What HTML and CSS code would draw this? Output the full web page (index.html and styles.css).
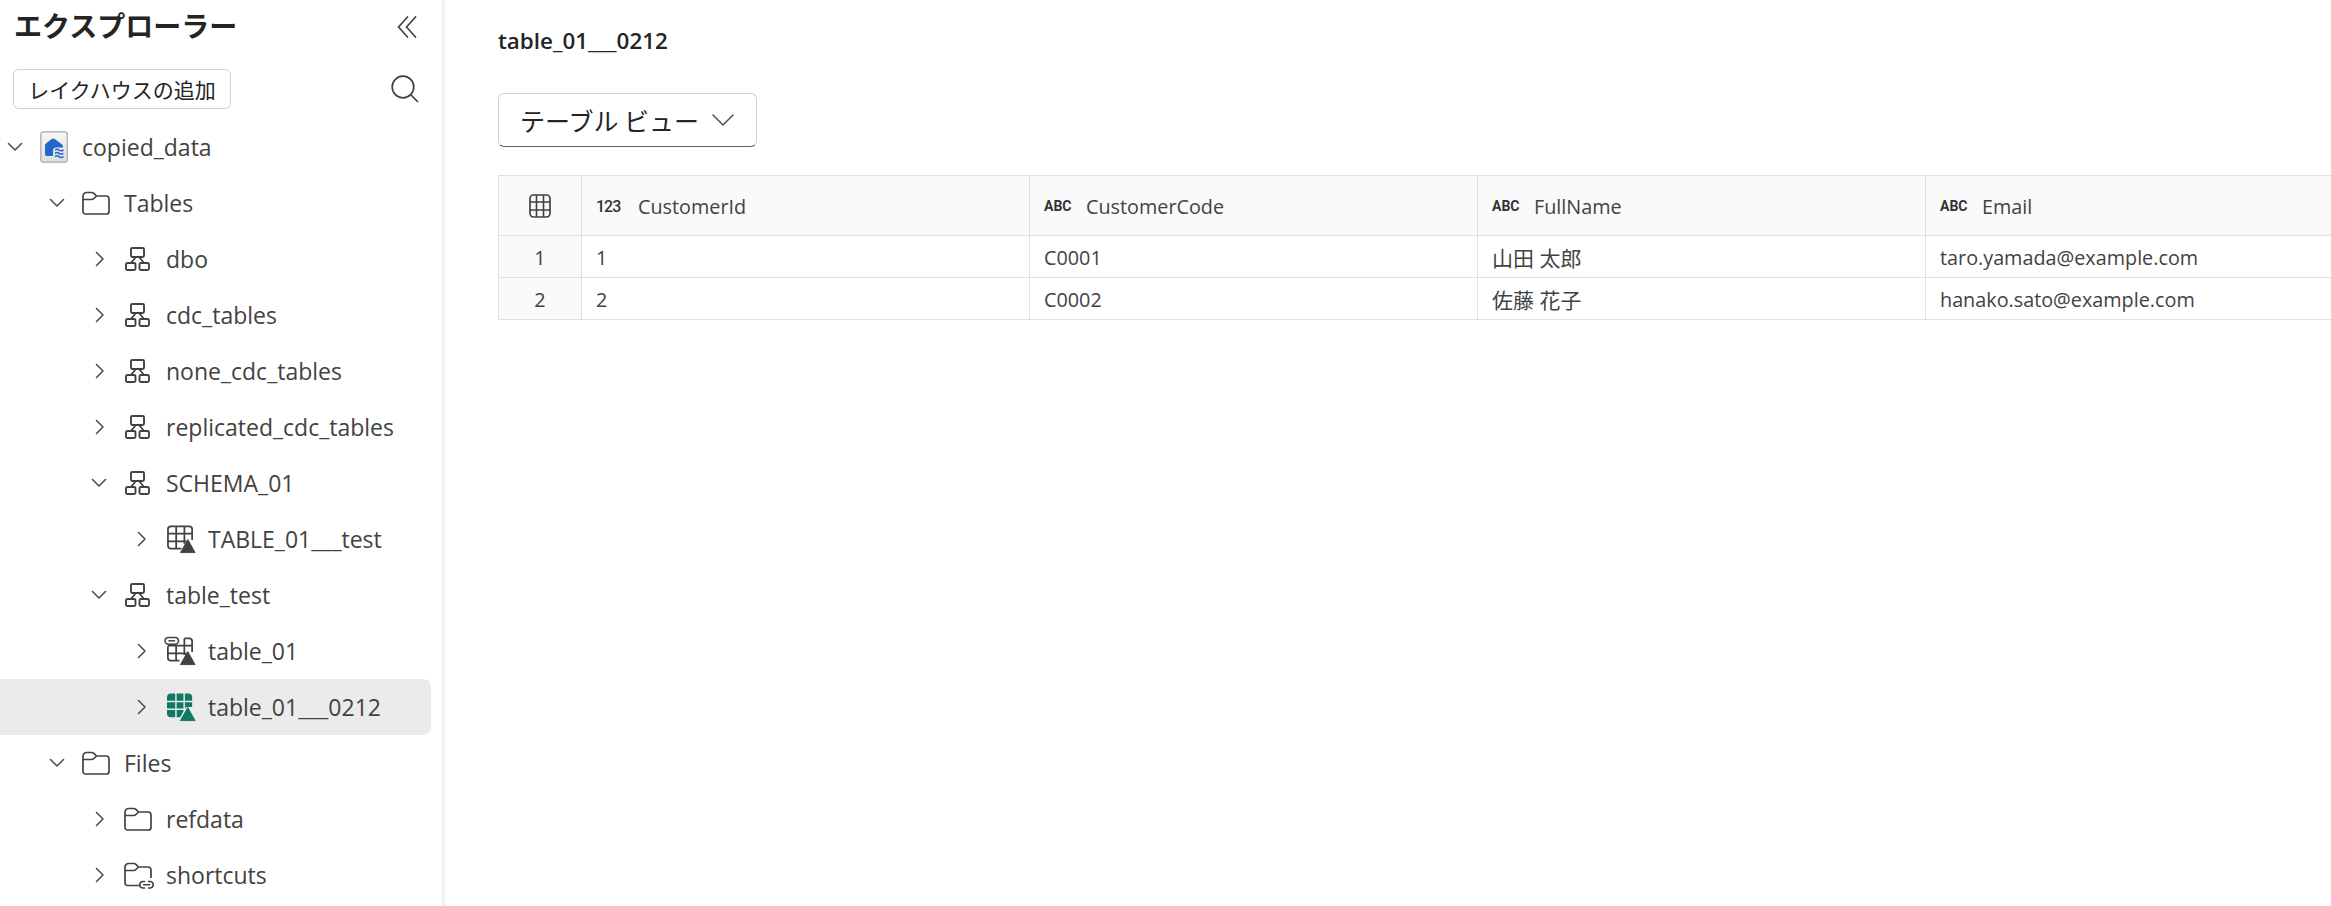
FILE: index.html
```html
<!DOCTYPE html>
<html lang="ja">
<head>
<meta charset="utf-8">
<title>table_01___0212</title>
<link rel="stylesheet" href="styles.css">
</head>
<body>
<svg class="defs" width="0" height="0" aria-hidden="true">
  <defs>
    <symbol id="chev-r" viewBox="0 0 10 16"><path d="M1.500 1.500 8 8l-6.500 6.500" fill="none" stroke="#505050" stroke-width="1.600" stroke-linecap="round" stroke-linejoin="round"/></symbol>
    <symbol id="chev-d" viewBox="0 0 16 10"><path d="M1.500 1.500 8 8l6.500-6.500" fill="none" stroke="#505050" stroke-width="1.600" stroke-linecap="round" stroke-linejoin="round"/></symbol>
    <symbol id="folder" viewBox="0 0 28 24"><path d="M1 5a3.500 3.500 0 0 1 3.500-3.500h5.200c1 0 1.800.4 2.500 1.100L14.500 5h9.500A3 3 0 0 1 27 8v12.500a2.500 2.500 0 0 1-2.500 2.500h-21A2.500 2.500 0 0 1 1 20.500V5Zm0 3.500h8.500c1 0 1.800-.4 2.400-1L14.500 5" fill="none" stroke="#424242" stroke-width="1.700" stroke-linejoin="round"/></symbol>
    <symbol id="folder-link" viewBox="0 0 30 28"><path d="M15 23.500H3.500A2.500 2.500 0 0 1 1 21V5a3.500 3.500 0 0 1 3.500-3.500h5.200c1 0 1.800.4 2.500 1.100L14.500 5h9.500A3 3 0 0 1 27 8v8M1 8.500h8.500c1 0 1.800-.4 2.400-1L14.500 5" fill="none" stroke="#424242" stroke-width="1.700" stroke-linejoin="round"/><path d="M20.500 19.500h-2a3.300 3.300 0 0 0 0 6.500h2m4-6.500h2a3.300 3.300 0 0 1 0 6.500h-2m-5-3.250h6" fill="none" stroke="#424242" stroke-width="1.600" stroke-linecap="round"/></symbol>
    <symbol id="schema" viewBox="0 0 25 24"><rect x="6" y="1" width="13" height="9" rx="1.200" fill="none" stroke="#424242" stroke-width="1.900"/><rect x="1" y="16" width="9.500" height="7" rx="1.500" fill="none" stroke="#424242" stroke-width="1.900"/><rect x="14.500" y="16" width="9.500" height="7" rx="1.500" fill="none" stroke="#424242" stroke-width="1.900"/><path d="M10.500 10.500 6 16M14.500 10.500 19 16" fill="none" stroke="#424242" stroke-width="1.800"/></symbol>
    <symbol id="table-tri" viewBox="0 0 30 29"><path d="M15 24H4a3 3 0 0 1-3-3V4a3 3 0 0 1 3-3h19a3 3 0 0 1 3 3v11M1 8.500h25M1 16.500h19M9.500 1v23M18 1v18" fill="none" stroke="#424242" stroke-width="1.800"/><path d="M14 28 21.500 14.500 29 28Z" fill="#424242" stroke="#424242" stroke-linejoin="round"/></symbol>
    <symbol id="table-link" viewBox="0 0 33 30"><path d="M16 25H7a3 3 0 0 1-3-3V10M4 17.500h19M12.500 10v15M21 2h5a3 3 0 0 1 3 3v11M21 2v17M4 9.500h25" fill="none" stroke="#424242" stroke-width="1.800"/><rect x="1" y="1" width="14" height="7" rx="3.500" fill="#fff" stroke="#424242" stroke-width="1.600"/><path d="M4.500 4.500h7" stroke="#424242" stroke-width="1.500"/><path d="M17 29 24.500 15.500 32 29Z" fill="#424242" stroke="#424242" stroke-linejoin="round"/></symbol>
    <symbol id="table-green" viewBox="0 0 30 29"><path d="M8.500 0v7.500H0V4a4 4 0 0 1 4-4h4.500ZM10 0h7v7.500h-7V0Zm8.500 0H22a4 4 0 0 1 4 4v3.500h-7.500V0ZM0 9h8.500v6.500H0V9Zm10 0h7v6.500h-7V9Zm8.500 0H26v5h-6l-1.500 1.500V9ZM0 17h8.500v7.500H4a4 4 0 0 1-4-4V17Zm10 0h7v1.500l-3.300 6H10V17Z" fill="#117865"/><path d="M14 28 21.500 14.500 29 28Z" fill="#117865" stroke="#117865" stroke-linejoin="round"/></symbol>
    <symbol id="grid" viewBox="0 0 22 24"><rect x="1" y="1" width="20" height="22" rx="3.500" fill="none" stroke="#424242" stroke-width="1.700"/><path d="M1 8h20M1 16h20M7.500 1v22M14.500 1v22" stroke="#424242" stroke-width="1.600"/></symbol>
  </defs>
</svg>

<div class="app">
  <aside class="side">
    <div class="side-head">
      <h1 class="side-title">エクスプローラー</h1>
      <svg class="collapse" viewBox="0 0 20 22"><path d="M10.500 1 1.500 11l9 10M18.500 1l-9 10 9 10" fill="none" stroke="#424242" stroke-width="1.700" stroke-linecap="round" stroke-linejoin="round"/></svg>
    </div>
    <div class="side-tools">
      <button class="add-btn">レイクハウスの追加</button>
      <svg class="search" viewBox="0 0 28 28"><circle cx="12" cy="12" r="10.800" fill="none" stroke="#424242" stroke-width="1.700"/><path d="m20 20 6.500 6.500" stroke="#424242" stroke-width="1.700" stroke-linecap="round"/></svg>
    </div>
    <ul class="tree">
      <li class="row l0"><svg class="chev-d"><use href="#chev-d"/></svg>
        <svg class="ico lake" viewBox="0 0 28 32">
          <defs><linearGradient id="lk" x1="0" y1="0" x2="0" y2="1"><stop offset="0" stop-color="#f8f8f8"/><stop offset="1" stop-color="#dedede"/></linearGradient></defs>
          <rect x=".8" y=".8" width="26.400" height="30.400" rx="2.500" fill="url(#lk)" stroke="#a8a8a8" stroke-width="1.200"/>
          <path d="M5 14.500c0-1 .5-1.700 1.200-2.200l5.500-4.200c1-.8 2-.8 3 0l7.300 5.400c.8.600 1 1.200 1 2v1h-7c-1.700 0-3 1.300-3 3V25H7a2 2 0 0 1-2-2v-8.500Z" fill="#2266cc"/>
          <path d="M15 19q2-1.600 4 0t4.500 0M15 22.300q2-1.600 4 0t4.500 0M15 25.600q2-1.600 4 0t4.500 0" fill="none" stroke="#2266cc" stroke-width="1.500"/>
        </svg><span>copied_data</span></li>
      <li class="row l1"><svg class="chev-d"><use href="#chev-d"/></svg><svg class="ico folder"><use href="#folder"/></svg><span>Tables</span></li>
      <li class="row l2"><svg class="chev-r"><use href="#chev-r"/></svg><svg class="ico schema"><use href="#schema"/></svg><span>dbo</span></li>
      <li class="row l2"><svg class="chev-r"><use href="#chev-r"/></svg><svg class="ico schema"><use href="#schema"/></svg><span>cdc_tables</span></li>
      <li class="row l2"><svg class="chev-r"><use href="#chev-r"/></svg><svg class="ico schema"><use href="#schema"/></svg><span>none_cdc_tables</span></li>
      <li class="row l2"><svg class="chev-r"><use href="#chev-r"/></svg><svg class="ico schema"><use href="#schema"/></svg><span>replicated_cdc_tables</span></li>
      <li class="row l2"><svg class="chev-d"><use href="#chev-d"/></svg><svg class="ico schema"><use href="#schema"/></svg><span>SCHEMA_01</span></li>
      <li class="row l3"><svg class="chev-r"><use href="#chev-r"/></svg><svg class="ico tbl"><use href="#table-tri"/></svg><span>TABLE_01___test</span></li>
      <li class="row l2"><svg class="chev-d"><use href="#chev-d"/></svg><svg class="ico schema"><use href="#schema"/></svg><span>table_test</span></li>
      <li class="row l3"><svg class="chev-r"><use href="#chev-r"/></svg><svg class="ico tbl-link"><use href="#table-link"/></svg><span>table_01</span></li>
      <li class="row l3 selected"><svg class="chev-r"><use href="#chev-r"/></svg><svg class="ico tbl"><use href="#table-green"/></svg><span>table_01___0212</span></li>
      <li class="row l1"><svg class="chev-d"><use href="#chev-d"/></svg><svg class="ico folder"><use href="#folder"/></svg><span>Files</span></li>
      <li class="row l2"><svg class="chev-r"><use href="#chev-r"/></svg><svg class="ico folder"><use href="#folder"/></svg><span>refdata</span></li>
      <li class="row l2"><svg class="chev-r"><use href="#chev-r"/></svg><svg class="ico folder-link"><use href="#folder-link"/></svg><span>shortcuts</span></li>
    </ul>
  </aside>

  <main class="main">
    <h2 class="main-title">table_01___0212</h2>
    <button class="view-btn"><span>テーブル ビュー</span><svg class="view-chev" viewBox="0 0 22 12"><path d="M1 1l10 10L21 1" fill="none" stroke="#505050" stroke-width="1.500" stroke-linecap="round" stroke-linejoin="round"/></svg></button>
    <div class="table">
      <div class="tr head">
        <div class="cell num"><svg class="grid-ico"><use href="#grid"/></svg></div>
        <div class="cell col"><span class="type t123">123</span><span class="label">CustomerId</span></div>
        <div class="cell col"><span class="type">ABC</span><span class="label">CustomerCode</span></div>
        <div class="cell col"><span class="type">ABC</span><span class="label">FullName</span></div>
        <div class="cell col email"><span class="type">ABC</span><span class="label">Email</span></div>
      </div>
      <div class="tr body">
        <div class="cell num">1</div>
        <div class="cell col">1</div>
        <div class="cell col">C0001</div>
        <div class="cell col jp">山田 太郎</div>
        <div class="cell col email">taro.yamada@example.com</div>
      </div>
      <div class="tr body">
        <div class="cell num">2</div>
        <div class="cell col">2</div>
        <div class="cell col">C0002</div>
        <div class="cell col jp">佐藤 花子</div>
        <div class="cell col email">hanako.sato@example.com</div>
      </div>
    </div>
  </main>
</div>
</body>
</html>
```

FILE: styles.css
```css
* { box-sizing: border-box; }

html, body {
  margin: 0;
  height: 100%;
  overflow: hidden;
  background: #fff;
}

body {
  font-family: "Open Sans", "Noto Sans CJK JP", sans-serif;
  color: #424242;
}

.defs { position: absolute; }

.app {
  display: flex;
  height: 906px;
}

/* Sidebar */
.side {
  width: 442px;
  flex: none;
  height: 906px;
  overflow: hidden;
  box-shadow: 1px 0 0 #ececec, 4px 0 0 #f5f5f5;
}

.side-head {
  display: flex;
  align-items: center;
  justify-content: space-between;
  height: 50px;
  padding: 0 25px 0 14px;
}

.side-title {
  margin: 0;
  font-size: 28px;
  font-weight: 700;
  color: #242424;
  font-family: "Noto Sans CJK JP", sans-serif;
  line-height: 50px;
}

.collapse { width: 20px; height: 22px; display: block; margin-top: 4px; }

.side-tools {
  display: flex;
  align-items: center;
  justify-content: space-between;
  height: 40px;
  margin-top: 19px;
  padding: 0 23px 0 13px;
}

.add-btn {
  width: 218px;
  height: 40px;
  padding: 0;
  background: #fff;
  border: 1px solid #d1d1d1;
  border-radius: 6px;
  font-family: "Noto Sans CJK JP", sans-serif;
  font-size: 21px;
  color: #242424;
}

.search { width: 28px; height: 28px; display: block; }

.tree {
  list-style: none;
  margin: 10px 0 0;
  padding: 0;
}

.row {
  display: flex;
  align-items: center;
  height: 56px;
  width: 431px;
  font-size: 23px;
  line-height: 54px;
  white-space: nowrap;
}

.row span { margin-top: -1px; }

.row.selected {
  background: #ebebeb;
  border-radius: 0 8px 8px 0;
}

.l0 { padding-left: 0; }
.l1 { padding-left: 42px; }
.l2 { padding-left: 84px; }
.l3 { padding-left: 126px; }

.chev-d, .chev-r { flex: none; display: block; }
.chev-d { width: 16px; height: 10px; margin: 0 18px 0 7px; }
.chev-r { width: 10px; height: 16px; margin: 0 20px 0 11px; }

.ico { flex: none; display: block; }
.lake { width: 28px; height: 32px; margin: 0 14px 0 -1px; }
.folder { width: 28px; height: 24px; margin: 0 14px 0 -1px; }
.folder-link { width: 30px; height: 28px; margin: 2px 12px 0 -1px; }
.schema { width: 25px; height: 24px; margin-right: 16px; }
.tbl { width: 29px; height: 29px; margin-right: 12px; }
.tbl-link { width: 32px; height: 30px; margin: 0 12px 0 -3px; }

/* Main */
.main {
  flex: 1;
  min-width: 0;
  overflow: hidden;
  padding-left: 56px;
}

.main-title {
  margin: 0;
  height: 82px;
  padding-top: 22px;
  font-size: 22.4px;
  line-height: 38px;
  font-weight: 600;
  color: #242424;
}

.view-btn {
  display: flex;
  align-items: center;
  width: 259px;
  height: 54px;
  margin: 11px 0 0;
  padding: 0 22px 0 21px;
  justify-content: space-between;
  background: #fff;
  border: 1px solid #d1d1d1;
  border-bottom-color: #616161;
  border-radius: 6px;
  font-family: "Noto Sans CJK JP", sans-serif;
  font-size: 25px;
  color: #242424;
}

.view-chev { width: 22px; height: 12px; display: block; }

.table {
  margin-top: 28px;
  width: 1833px;
  border-top: 1px solid #e0e0e0;
  border-left: 1px solid #e0e0e0;
  font-size: 19.8px;
}

.tr {
  display: grid;
  grid-template-columns: 83px 448px 448px 448px 406px;
  border-bottom: 1px solid #e0e0e0;
}

.tr.head { height: 60px; background: #fafafa; }
.tr.body { height: 42px; }

.cell {
  display: flex;
  align-items: center;
  padding: 1px 0 0 14px;
  border-right: 1px solid #e0e0e0;
  color: #424242;
  white-space: nowrap;
}

.cell.email { border-right: 0; }

.cell.jp { font-size: 21px; }

.cell.num {
  justify-content: center;
  padding-left: 0;
  background: #fafafa;
}

.grid-ico { width: 22px; height: 24px; display: block; }

.label { margin-top: 1px; }

.type {
  width: 42px;
  flex: none;
  font-size: 14px;
  font-weight: 700;
  color: #333;
  font-family: Roboto, sans-serif;
}

.t123 { font-size: 16px; letter-spacing: -1px; font-weight: 500; }
```
